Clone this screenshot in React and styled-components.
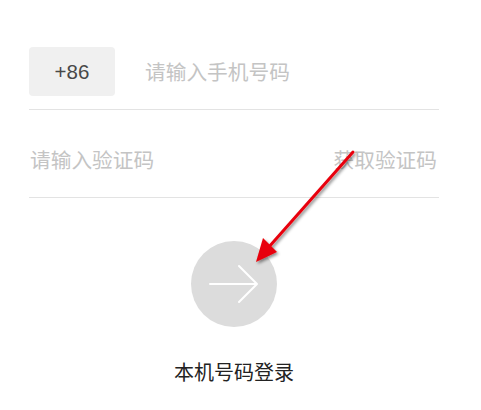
import React from "react";
import styled, { createGlobalStyle } from "styled-components";

const Global = createGlobalStyle`
  html, body { margin: 0; padding: 0; background: #fff; }
  body { font-family: "Noto Sans CJK SC", "Noto Sans", sans-serif; }
`;

const Page = styled.div`
  position: relative;
  width: 481px;
  height: 410px;
  overflow: hidden;
  background: #fff;
`;

const Form = styled.div`
  display: flex;
  flex-direction: column;
  padding: 0 42px 0 29px;
`;

const Row = styled.div`
  display: flex;
  align-items: center;
  justify-content: space-between;
  border-bottom: 1.5px solid #e3e3e3;
  padding: ${(p) => p.$pad};
`;

const Prefix = styled.div`
  width: 86px;
  height: 49px;
  border-radius: 4px;
  background: #f0f0f0;
  color: #484848;
  font-family: "Liberation Sans", "Noto Sans", sans-serif;
  font-size: 20.5px;
  display: flex;
  align-items: center;
  justify-content: center;
`;

const Placeholder = styled.span`
  color: #c4c4c4;
  font-size: 20.7px;
  line-height: 1;
  margin-left: ${(p) => p.$ml || 0}px;
  flex: ${(p) => (p.$grow ? 1 : "none")};
`;

const Center = styled.div`
  display: flex;
  flex-direction: column;
  align-items: center;
  padding-top: 43px;
  padding-right: 13px;
`;

const Circle = styled.div`
  width: 86px;
  height: 86px;
  border-radius: 50%;
  background: #dcdcdc;
  display: flex;
  align-items: center;
  justify-content: center;
`;

const Caption = styled.div`
  margin-top: 35px;
  color: #222;
  font-size: 20px;
  line-height: 1;
`;

const Overlay = styled.svg`
  position: absolute;
  left: 0;
  top: 0;
  pointer-events: none;
`;

export default function App() {
  return (
    <Page>
      <Global />
      <Form>
        <Row $pad="47px 0 13px 0">
          <Prefix>+86</Prefix>
          <Placeholder $ml={30} $grow>请输入手机号码</Placeholder>
        </Row>
        <Row $pad="39px 2px 27px 1px">
          <Placeholder>请输入验证码</Placeholder>
          <Placeholder>获取验证码</Placeholder>
        </Row>
      </Form>
      <Center>
        <Circle>
          <svg width="52" height="42" viewBox="0 0 52 42">
            <path d="M2 21 H48 M31 3 L49 21 L31 39" fill="none" stroke="#fff" strokeWidth="2" strokeLinecap="round" strokeLinejoin="round" />
          </svg>
        </Circle>
        <Caption>本机号码登录</Caption>
      </Center>
      <Overlay width="481" height="410" viewBox="0 0 481 410">
        <defs>
          <filter id="sh" x="-20%" y="-20%" width="140%" height="140%">
            <feDropShadow dx="1.5" dy="2" stdDeviation="1.5" floodColor="#000" floodOpacity="0.45" />
          </filter>
        </defs>
        <g filter="url(#sh)">
          <line x1="353" y1="152" x2="268" y2="248" stroke="#e8000b" strokeWidth="3" strokeLinecap="round" />
          <polygon points="256,262 263,238 277,252" fill="#e8000b" />
        </g>
      </Overlay>
    </Page>
  );
}
